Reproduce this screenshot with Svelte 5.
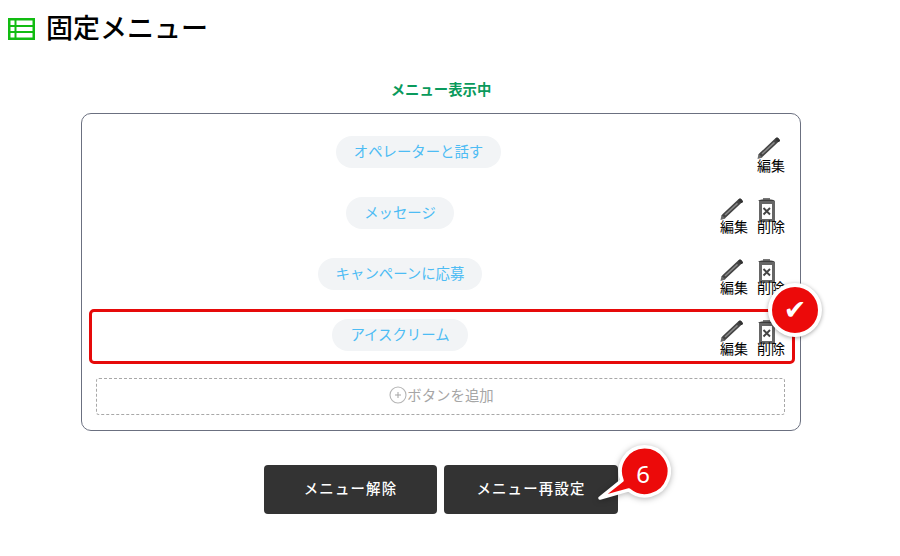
<script>
  const rows = [
    { label: 'オペレーターと話す', del: false },
    { label: 'メッセージ', del: true },
    { label: 'キャンペーンに応募', del: true },
    { label: 'アイスクリーム', del: true, active: true }
  ];
</script>

<div class="page">
  <header class="head">
    <svg class="head-icon" viewBox="0 0 27 22" width="27" height="22" aria-hidden="true">
      <rect width="27" height="22" fill="#12bc12"/>
      <rect x="2.5" y="2.5" width="4" height="4.5" fill="#fff"/>
      <rect x="8.5" y="2.5" width="16" height="4.5" fill="#fff"/>
      <rect x="2.5" y="9" width="4" height="4" fill="#fff"/>
      <rect x="8.5" y="9" width="16" height="4" fill="#fff"/>
      <rect x="2.5" y="15" width="4" height="4.5" fill="#fff"/>
      <rect x="8.5" y="15" width="16" height="4.5" fill="#fff"/>
    </svg>
    <h1>固定メニュー</h1>
  </header>

  <p class="status">メニュー表示中</p>

  <section class="box">
    {#each rows as r}
      <div class="row" class:active={r.active}>
        <div class="pill-wrap"><span class="pill">{r.label}</span></div>
        <div class="actions">
          <div class="action">
            <svg class="ico" viewBox="0 0 28 24" width="28" height="24" aria-hidden="true">
              <path d="M4 20 L20 5" stroke="#444" stroke-width="4.6" stroke-linecap="round" fill="none"/>
              <path d="M5 19 L17.5 7.4" stroke="#888" stroke-width="1.5" fill="none"/>
              <path d="M20 4 L21.5 5.5" stroke="#333" stroke-width="3" stroke-linecap="round"/>
              <path d="M0.5 24 L1.5 19 L5.5 22.5 Z" fill="#6a6a6a"/>
            </svg>
            <span>編集</span>
          </div>
          {#if r.del}
            <div class="action">
              <svg class="ico" viewBox="0 0 28 26" width="28" height="26" aria-hidden="true">
                <path d="M1 5 Q2 3.5 5 3.5 H14 Q17 3.5 18 5 Z" fill="#3d3d3d"/>
                <path d="M6 3h7" stroke="#555" stroke-width="1.6" fill="none"/>
                <rect x="3.5" y="6.5" width="13" height="18" fill="#fff" stroke="#666" stroke-width="3"/>
                <path d="M6.5 12l6.5 6.5M13 12l-6.5 6.5" stroke="#444" stroke-width="1.9" fill="none"/>
              </svg>
              <span class="del-label">削除</span>
            </div>
          {/if}
        </div>
      </div>
    {/each}

    <button class="add" type="button">
      <svg viewBox="0 0 18 18" width="18" height="18" aria-hidden="true">
        <circle cx="9" cy="9" r="8" fill="none" stroke="#b5b5b5" stroke-width="1.1"/>
        <path d="M6 9h6M9 6v6" stroke="#a5a5a5" stroke-width="1"/>
      </svg>
      ボタンを追加
    </button>

    <div class="check">✔</div>
  </section>

  <div class="buttons">
    <button class="dark" type="button">メニュー解除</button>
    <button class="dark wide" type="button">メニュー再設定</button>
    <svg class="bubble" viewBox="0 0 80 70" width="80" height="70" aria-hidden="true">
      <path d="M5 58 L27 40.4 A24.5 24.5 0 1 1 33.8 49.9 Z" fill="#ec0a0a" stroke="#fff" stroke-width="3.5" stroke-linejoin="round"/>
    </svg>
    <span class="six">6</span>
  </div>
</div>

<style>
  :global(body) {
    margin: 0;
    background: #fff;
    font-family: "Noto Sans CJK JP", "Noto Sans", sans-serif;
  }
  .page {
    width: 900px;
    height: 556px;
    overflow: hidden;
  }
  .head {
    display: flex;
    align-items: center;
    gap: 11px;
    padding: 7px 0 0 8px;
    height: 43px;
  }
  .head-icon {
    flex: none;
    margin-top: 1px;
  }
  h1 {
    margin: -3px 0 0;
    font-size: 27px;
    font-weight: 500;
    color: #000;
    line-height: 42px;
  }
  .status {
    margin: 29px 0 0 81px;
    width: 720px;
    text-align: center;
    font-size: 14.4px;
    line-height: 20px;
    font-weight: 700;
    color: #0a9a5c;
  }
  .box {
    position: relative;
    box-sizing: border-box;
    width: 720px;
    height: 318px;
    margin: 14px 0 0 81px;
    padding: 11px 5px 15px 7px;
    border: 1px solid #6b7080;
    border-radius: 10px;
  }
  .row {
    box-sizing: border-box;
    display: flex;
    height: 54px;
    margin-bottom: 7px;
    padding: 0 7px 0 0;
    border: 3px solid transparent;
    border-radius: 5px;
  }
  .row.active {
    border-color: #e60a0a;
    margin-top: 8px;
    margin-bottom: 0;
    height: 55px;
  }
  .row.active .pill-wrap {
    padding-bottom: 3px;
  }
  .row.active .actions {
    padding-top: 6px;
  }
  .pill-wrap {
    flex: 1;
    display: flex;
    justify-content: center;
    align-items: center;
  }
  .pill {
    display: block;
    padding: 0 18px;
    height: 32px;
    line-height: 29px;
    border-radius: 16px;
    background: #f2f4f6;
    color: #4dbcf4;
    font-size: 14.4px;
  }
  .actions {
    display: flex;
    gap: 9px;
    margin-left: 12px;
    padding-top: 7px;
  }
  .action {
    width: 28px;
    color: #000;
    font-size: 14px;
    line-height: 16px;
    text-align: center;
  }
  .action span {
    display: block;
    margin-top: -2px;
  }
  .action span.del-label {
    margin-top: -4px;
  }
  .ico {
    display: block;
  }
  .add {
    box-sizing: border-box;
    display: flex;
    align-items: center;
    justify-content: center;
    width: 689px;
    height: 37px;
    margin: 14px 0 0 7px;
    padding: 0 0 4px 2px;
    background: #fff;
    border: 1px dashed #a8a8a8;
    border-radius: 3px;
    font: inherit;
    font-size: 14.4px;
    color: #a6a6a6;
  }
  .check {
    position: absolute;
    left: 686px;
    top: 169px;
    box-sizing: border-box;
    width: 54px;
    height: 54px;
    border: 4px solid #fff;
    border-radius: 50%;
    background: #ec0a0a;
    box-shadow: 0 1px 4px rgba(0,0,0,.35);
    color: #fff;
    font-family: "DejaVu Sans", sans-serif;
    font-size: 27px;
    line-height: 46px;
    text-align: center;
  }
  .buttons {
    position: relative;
    display: flex;
    gap: 7px;
    margin: 34px 0 0 264px;
  }
  .dark {
    width: 173px;
    height: 49px;
    padding: 0 0 4px;
    border: 0;
    border-radius: 4px;
    background: #333;
    color: #fff;
    font: inherit;
    font-size: 14.4px;
    font-weight: 500;
    letter-spacing: 1.2px;
  }
  .dark.wide {
    width: 174px;
  }
  .bubble {
    position: absolute;
    left: 331px;
    top: -25px;
    filter: drop-shadow(0 1px 3px rgba(0,0,0,.3));
  }
  .six {
    position: absolute;
    left: 370px;
    top: -7px;
    width: 18px;
    text-align: center;
    color: #fff;
    font-family: "Noto Sans", sans-serif;
    font-size: 24px;
    line-height: 32px;
  }
</style>
